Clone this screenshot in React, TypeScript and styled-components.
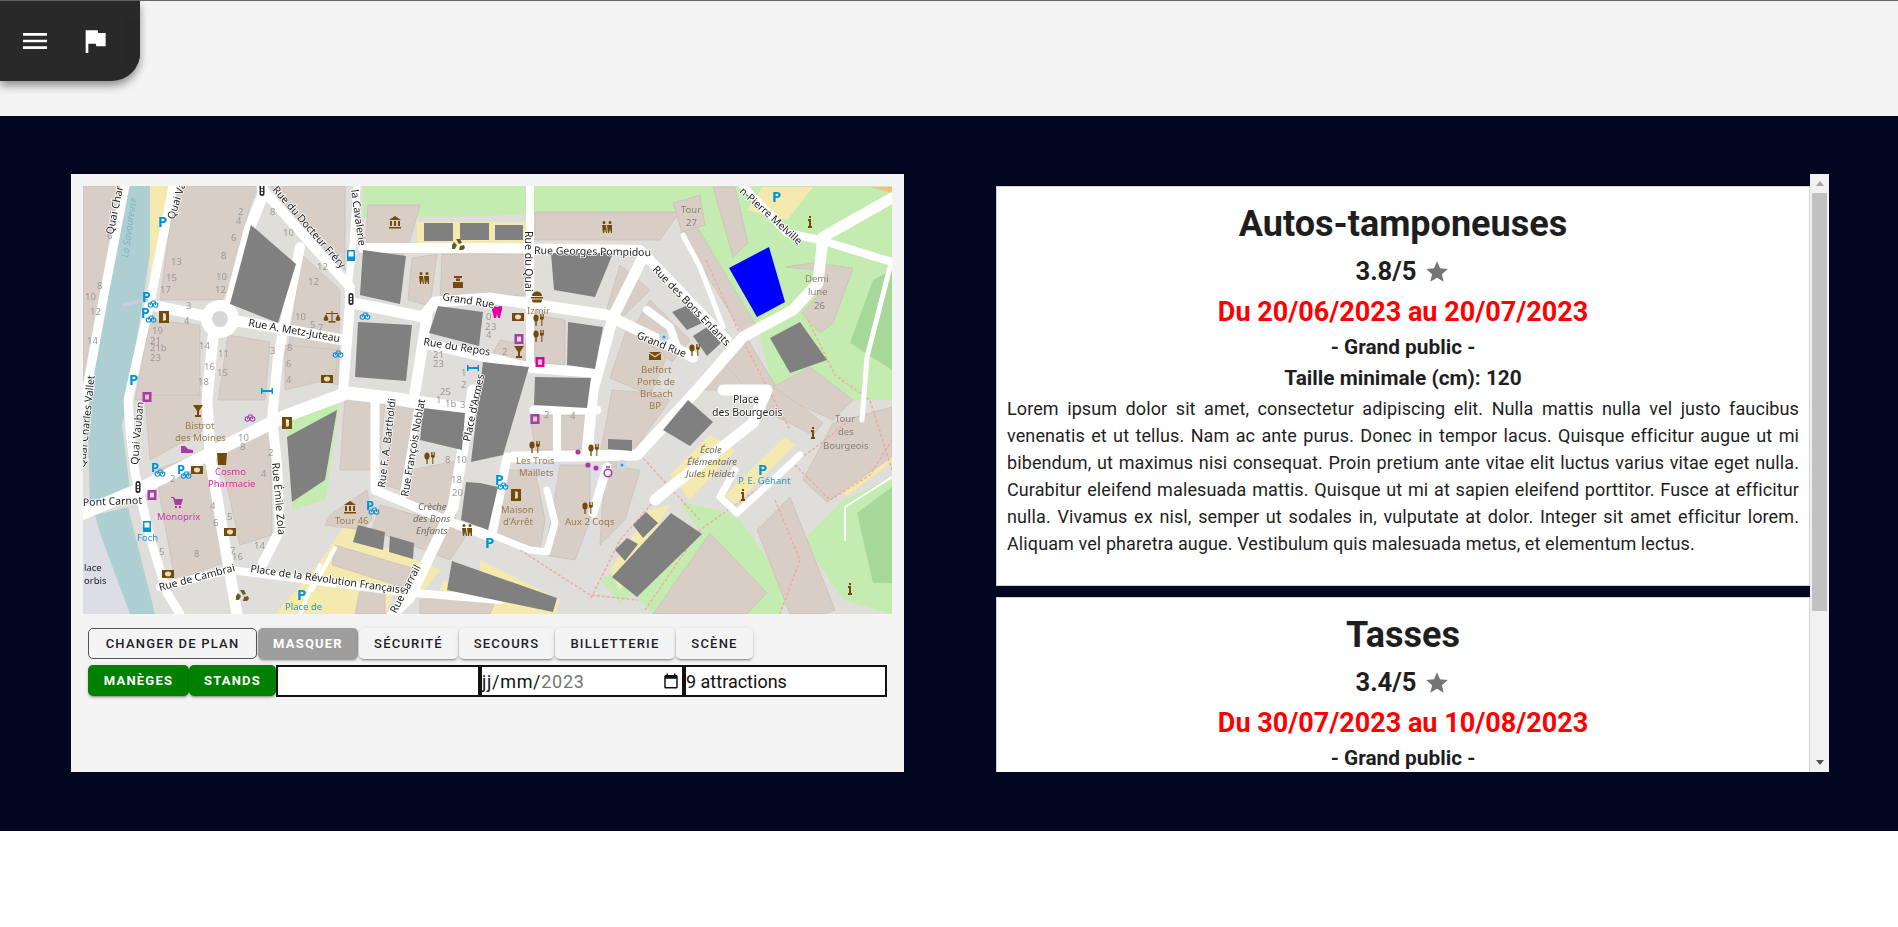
import React from "react";
import styled, { createGlobalStyle } from "styled-components";

const GlobalStyle = createGlobalStyle`
  html, body {
    margin: 0;
    padding: 0;
    background: #fff;
    font-family: Roboto, "Liberation Sans", sans-serif;
    overflow: hidden;
  }
`;

const Page = styled.div`
  width: 1898px;
  height: 927px;
  background: #fff;
`;

const Header = styled.header`
  height: 115px;
  background: #f4f4f4;
  border-top: 1px solid #666;
`;

const Toolbar = styled.nav`
  width: 140px;
  height: 80px;
  display: flex;
  align-items: center;
  gap: 28px;
  padding-left: 19px;
  box-sizing: border-box;
  background: #292929;
  border-bottom-right-radius: 28px;
  box-shadow: 0 5px 9px rgba(0, 0, 0, 0.4);
  position: relative;
  overflow: hidden;
  z-index: 2;
`;

const ToolbarTab = styled.span`
  position: absolute;
  right: 0;
  top: 19px;
  width: 15px;
  height: 44px;
  background: #272727;
  border-bottom-left-radius: 6px;
`;

const ToolIcon = styled.svg`
  width: 32px;
  height: 32px;
  fill: #fff;
  flex: none;
`;

const Hero = styled.main`
  height: 715px;
  box-sizing: border-box;
  padding: 58px 69px 59px 71px;
  background: #030620;
  display: grid;
  grid-template-columns: 833px 833px;
  column-gap: 92px;
`;

const MapPanel = styled.section`
  background: #f4f4f4;
  padding: 12px;
  box-sizing: border-box;
  height: 598px;
`;

const MapFrame = styled.div`
  width: 809px;
  height: 428px;
  overflow: hidden;
  background: #dedcd9;
`;

const MapSvg = styled.svg`
  display: block;
  width: 809px;
  height: 428px;
  filter: blur(0.35px);
`;

const Controls = styled.div`
  margin-top: 14px;
  padding-left: 5px;
  display: flex;
  flex-direction: column;
  gap: 5px;
`;

const ControlRow = styled.div<{ $gap?: number }>`
  display: flex;
  gap: ${(p) => p.$gap ?? 0}px;
  height: 32px;
`;

type Tone = "outlined" | "active" | "plain" | "green";

const toneStyles: Record<Tone, string> = {
  outlined: "background:#f4f4f4;color:#1d1d2b;border:1px solid #555;box-shadow:none;",
  active: "background:#9e9e9e;color:#fff;font-weight:700;",
  plain: "background:#f4f4f4;color:#1d1d2b;",
  green: "background:#008000;color:#fff;font-weight:700;",
};

const Btn = styled.button<{ $tone: Tone; $w: number }>`
  width: ${(p) => p.$w}px;
  height: 31px;
  padding: 0;
  border: none;
  border-radius: 5px;
  font-family: Roboto, sans-serif;
  font-size: 13px;
  font-weight: 500;
  letter-spacing: 1.2px;
  text-transform: uppercase;
  box-shadow: 0 3px 1px -2px rgba(0, 0, 0, 0.2), 0 2px 2px 0 rgba(0, 0, 0, 0.14),
    0 1px 5px 0 rgba(0, 0, 0, 0.12);
  ${(p) => toneStyles[p.$tone]}
`;

const Field = styled.div<{ $w: number; $spaced?: boolean }>`
  width: ${(p) => p.$w}px;
  height: 32px;
  box-sizing: border-box;
  border: 2px solid #111;
  background: #fff;
  font-size: 18px;
  letter-spacing: ${(p) => (p.$spaced ? "0.7px" : "0")};
  color: #111;
  display: flex;
  align-items: center;
`;

const DateMuted = styled.span`
  color: #757575;
`;

const CalendarIcon = styled.svg`
  width: 18px;
  height: 18px;
  margin-left: auto;
  margin-right: 2px;
  fill: #111;
`;

const ListPane = styled.section`
  height: 598px;
  display: flex;
`;

const ListScroller = styled.div`
  width: 814px;
  flex: none;
  overflow: hidden;
  padding-top: 12px;
  box-sizing: border-box;
`;

const Card = styled.article`
  background: #fff;
  box-sizing: border-box;
  height: 400px;
  margin-bottom: 11px;
  padding: 15px 10px 0;
  border: 1px solid #cfcfd6;
  color: #1e1e1e;
  text-align: center;
`;

const Title = styled.h2`
  margin: 0;
  font-size: 36px;
  font-weight: 700;
  line-height: 44px;
`;

const Rating = styled.div`
  margin-top: 7px;
  font-size: 25.6px;
  font-weight: 700;
  line-height: 36px;
  display: flex;
  justify-content: center;
  align-items: center;
  gap: 8px;
`;

const StarIcon = styled.svg`
  width: 26px;
  height: 26px;
  fill: #757575;
  margin-top: 2px;
`;

const Dates = styled.div`
  margin-top: 4px;
  font-size: 27px;
  font-weight: 700;
  line-height: 38px;
  color: #f00;
`;

const Audience = styled.div`
  font-size: 20.8px;
  font-weight: 700;
  line-height: 32px;
`;

const MinSize = styled.div`
  font-size: 20.8px;
  font-weight: 700;
  line-height: 31px;
  margin-bottom: 1px;
`;

const Description = styled.p`
  margin: 0;
  font-size: 18px;
  line-height: 27px;
  letter-spacing: 0.1px;
  text-align: justify;
`;

const ScrollBar = styled.div`
  width: 19px;
  flex: none;
  background: #f1f1f1;
  display: flex;
  flex-direction: column;
`;

const ScrollArrow = styled.div<{ $down?: boolean }>`
  height: 19px;
  flex: none;
  display: flex;
  align-items: center;
  justify-content: center;
  &::before {
    content: "";
    border-left: 4px solid transparent;
    border-right: 4px solid transparent;
    ${(p) => (p.$down ? "border-top: 5px solid #505050;" : "border-bottom: 5px solid #a3a3a3;")}
  }
`;

const ScrollTrack = styled.div`
  flex: 1;
  padding: 0 2px;
`;

const ScrollThumb = styled.div`
  height: 418px;
  background: #c1c1c1;
`;

const LOREM =
  "Lorem ipsum dolor sit amet, consectetur adipiscing elit. Nulla mattis nulla vel justo faucibus venenatis et ut tellus. Nam ac ante purus. Donec in tempor lacus. Quisque efficitur augue ut mi bibendum, ut maximus nisi consequat. Proin pretium ante vitae elit luctus varius vitae eget nulla. Curabitur eleifend malesuada mattis. Quisque ut mi at sapien eleifend porttitor. Fusce at efficitur nulla. Vivamus ex nisl, semper ut sodales in, vulputate at dolor. Integer sit amet efficitur lorem. Aliquam vel pharetra augue. Vestibulum quis malesuada metus, et elementum lectus.";

const attractions = [
  { name: "Autos-tamponeuses", rate: "3.8/5", dates: "Du 20/06/2023 au 20/07/2023", min: 120 },
  { name: "Tasses", rate: "3.4/5", dates: "Du 30/07/2023 au 10/08/2023", min: 100 },
];

/* map data, in page coordinates (viewBox starts at the map's corner) */
type Pts = number[];
const BUILDINGS: Pts[] = [
  [125, 186, 122, 215, 112, 270, 100, 320, 90, 380, 83, 400, 83, 186],
  [176, 186, 258, 186, 250, 205, 232, 280, 222, 300, 160, 300, 168, 240],
  [270, 186, 345, 186, 345, 270, 320, 250],
  [302, 255, 340, 290, 338, 385, 285, 372],
  [372, 262, 402, 258, 410, 240, 420, 205, 368, 205, 366, 240],
  [412, 258, 437, 254, 430, 306, 408, 300],
  [442, 254, 525, 254, 525, 295, 440, 300],
  [535, 212, 680, 212, 660, 240, 535, 240],
  [673, 203, 700, 195, 705, 225, 682, 233],
  [713, 187, 735, 187, 748, 243, 733, 257],
  [680, 233, 697, 227, 757, 327, 743, 333],
  [150, 320, 200, 325, 200, 400, 135, 400],
  [228, 335, 270, 342, 265, 400, 218, 400],
  [285, 345, 338, 350, 335, 378, 285, 390],
  [145, 395, 205, 395, 205, 430, 150, 460],
  [155, 470, 212, 450, 232, 560, 175, 580],
  [218, 445, 270, 420, 272, 535, 240, 545],
  [345, 395, 385, 405, 378, 470, 340, 470],
  [395, 405, 415, 410, 400, 490, 385, 485],
  [410, 470, 462, 460, 455, 520, 405, 498],
  [330, 515, 367, 490, 372, 520, 362, 530, 325, 525],
  [380, 505, 470, 530, 450, 560, 372, 530],
  [335, 545, 425, 572, 412, 590, 332, 565],
  [360, 590, 385, 590, 385, 614, 355, 614],
  [420, 600, 500, 590, 490, 614, 420, 614],
  [530, 415, 590, 415, 585, 450, 535, 450],
  [535, 315, 565, 320, 565, 365, 535, 362],
  [500, 340, 530, 345, 528, 368, 490, 358],
  [620, 265, 650, 290, 620, 320, 605, 315],
  [628, 325, 672, 345, 650, 395, 610, 378],
  [650, 300, 690, 340, 672, 362, 632, 330],
  [612, 390, 640, 392, 670, 400, 620, 470, 600, 455],
  [560, 465, 590, 465, 590, 520, 575, 560, 545, 555],
  [505, 470, 535, 470, 545, 520, 540, 550, 490, 530],
  [605, 465, 640, 470, 625, 520, 600, 545],
  [720, 360, 745, 345, 760, 365, 735, 390, 700, 390],
  [745, 335, 775, 385, 823, 423, 813, 435, 773, 415, 720, 360],
  [785, 267, 813, 263, 853, 268, 833, 323, 820, 333, 802, 313, 817, 297, 818, 270],
  [803, 480, 833, 423, 892, 407, 892, 457, 827, 502],
  [773, 387, 810, 367, 853, 400, 833, 420, 800, 405],
  [653, 614, 710, 533, 767, 593, 747, 614],
  [757, 530, 790, 497, 835, 610, 825, 614, 790, 614],
];

const GREENS: Pts[] = [
  [363, 186, 713, 186, 730, 210, 700, 212, 363, 218],
  [713, 186, 892, 186, 892, 400, 853, 400, 810, 367, 773, 387, 757, 327, 697, 227],
  [286, 413, 340, 395, 326, 500, 292, 510],
  [680, 502, 720, 510, 740, 520, 790, 590, 780, 614, 653, 614, 637, 597, 702, 534],
  [803, 540, 843, 500, 892, 478, 892, 614, 843, 600],
  [600, 580, 625, 566, 640, 590, 620, 602],
];

const DARK_GREENS: Pts[] = [
  [873, 280, 892, 270, 892, 370, 850, 343],
  [857, 513, 892, 487, 892, 583, 873, 583],
];

const YELLOWS: Pts[] = [
  [417, 222, 527, 222, 527, 244, 417, 244],
  [318, 565, 345, 525, 380, 545, 440, 570, 425, 590, 395, 590, 385, 614, 275, 614],
  [444, 580, 492, 595, 490, 614, 430, 614],
  [480, 560, 560, 600, 555, 614, 480, 614],
  [610, 570, 650, 510, 670, 505, 620, 590],
  [725, 495, 785, 437, 795, 445, 735, 505],
  [150, 186, 175, 186, 150, 300],
  [137, 400, 145, 340, 150, 345, 140, 400],
  [763, 187, 813, 187, 787, 220, 747, 210],
  [842, 492, 892, 455, 892, 462, 847, 496],
  [670, 475, 710, 435, 735, 450, 690, 500],
];

const LILAC: Pts[] = [
  [83, 530, 95, 520, 130, 614, 83, 614],
  [505, 457, 560, 458, 600, 470, 585, 500, 545, 480],
  [552, 490, 595, 520, 590, 545, 560, 540],
];

type Road = { p: Pts; w: number };
const ROADS: Road[] = [
  { p: [125, 186, 103, 300, 83, 410], w: 9 },
  { p: [173, 186, 150, 303, 142, 337, 128, 400, 130, 430, 135, 473, 150, 537, 167, 593, 180, 614], w: 9 },
  { p: [83, 513, 138, 490, 283, 417, 347, 393, 390, 398, 470, 410], w: 13 },
  { p: [150, 305, 220, 319, 250, 323, 343, 340], w: 11 },
  { p: [230, 303, 250, 227, 263, 195, 262, 186], w: 11 },
  { p: [263, 190, 350, 287, 350, 303, 343, 392], w: 10 },
  { p: [213, 337, 207, 400, 210, 457, 227, 557, 237, 614], w: 11 },
  { p: [300, 247, 278, 357, 272, 420, 277, 463, 280, 530, 263, 563], w: 10 },
  { p: [357, 186, 353, 243, 348, 290], w: 7 },
  { p: [363, 248, 490, 248, 640, 250, 727, 340], w: 10 },
  { p: [353, 303, 423, 317, 435, 302, 490, 298, 607, 315, 693, 357], w: 11 },
  { p: [427, 317, 415, 392], w: 11 },
  { p: [423, 343, 490, 358, 532, 368, 597, 373], w: 10 },
  { p: [530, 186, 530, 293, 530, 367], w: 8 },
  { p: [643, 257, 613, 317, 593, 390, 587, 453], w: 11 },
  { p: [892, 198, 823, 237, 818, 283, 793, 310, 743, 337, 697, 390, 637, 455, 513, 457], w: 11 },
  { p: [743, 186, 787, 233, 820, 240, 892, 262], w: 8 },
  { p: [890, 267, 867, 357, 862, 420], w: 5 },
  { p: [683, 235, 700, 267, 723, 327], w: 5 },
  { p: [647, 310, 670, 327, 677, 347], w: 8 },
  { p: [723, 390, 767, 390, 753, 423, 667, 490, 655, 500], w: 11 },
  { p: [800, 455, 737, 513, 720, 497, 735, 470], w: 7 },
  { p: [534, 410, 597, 410], w: 9 },
  { p: [557, 410, 557, 455], w: 8 },
  { p: [507, 457, 493, 530], w: 9 },
  { p: [547, 490, 555, 523, 547, 552, 530, 550, 480, 530], w: 7 },
  { p: [607, 467, 593, 513], w: 9 },
  { p: [160, 587, 230, 570, 403, 592, 500, 600], w: 8 },
  { p: [473, 390, 453, 507, 410, 597, 393, 614], w: 11 },
  { p: [418, 407, 403, 497], w: 7 },
  { p: [375, 400, 375, 490, 453, 523, 490, 537], w: 9 },
  { p: [320, 565, 300, 614], w: 4 },
  { p: [335, 548, 312, 590], w: 4 },
  { p: [892, 477, 845, 507, 845, 540], w: 2 },
];

const FOOTWAYS: Pts[] = [
  [706, 260, 745, 345, 790, 430],
  [640, 455, 700, 520],
  [520, 550, 590, 595, 638, 600],
  [645, 610, 700, 530, 812, 450, 850, 420],
  [795, 465, 830, 500, 870, 475, 892, 440],
  [655, 500, 620, 540, 590, 600],
  [808, 320, 835, 375, 870, 400, 892, 470],
  [775, 500, 800, 560, 780, 614],
];

const GRAYS: Pts[] = [
  [251, 225, 296, 264, 278, 323, 230, 304],
  [363, 250, 406, 256, 400, 304, 360, 295],
  [358, 322, 412, 325, 406, 381, 355, 377],
  [438, 306, 483, 312, 479, 346, 429, 333],
  [424, 223, 453, 223, 453, 241, 424, 241],
  [460, 223, 489, 223, 489, 240, 460, 240],
  [495, 225, 523, 225, 523, 240, 495, 240],
  [551, 253, 613, 253, 595, 297, 554, 290],
  [568, 322, 603, 327, 595, 369, 567, 365],
  [483, 362, 529, 367, 503, 455, 471, 462],
  [480, 483, 498, 487, 488, 530, 461, 520, 466, 482],
  [423, 408, 465, 413, 462, 450, 420, 440],
  [535, 377, 591, 378, 587, 408, 534, 405],
  [688, 400, 713, 422, 690, 446, 663, 430],
  [337, 410, 325, 480, 292, 502, 287, 437],
  [358, 525, 385, 532, 383, 550, 353, 542],
  [390, 536, 414, 543, 413, 559, 389, 552],
  [452, 561, 557, 598, 553, 612, 447, 590],
  [671, 513, 702, 534, 637, 597, 612, 577],
  [646, 512, 658, 523, 643, 538, 633, 525],
  [627, 538, 638, 544, 625, 561, 615, 550],
  [688, 305, 702, 323, 687, 330, 672, 312],
  [707, 327, 721, 343, 707, 356, 693, 336],
  [800, 322, 827, 360, 790, 373, 770, 338],
  [608, 439, 632, 440, 632, 451, 608, 449],
];

type Lbl = { x: number; y: number; t: string; r?: number; c?: string; i?: boolean };
const INK = "#222";
const BR = "#9b7a4c";
const PK = "#c038b0";
const BL = "#2f8fd0";
const GY = "#8a8275";
const IT = "#6d6a5c";
const ROAD_LABELS: Lbl[] = [
  { x: 113, y: 235, t: "Quai Charles", r: -78 },
  { x: 85, y: 468, t: "Quai Charles Vallet", r: -84 },
  { x: 174, y: 220, t: "Quai Va", r: -72 },
  { x: 138, y: 465, t: "Quai Vauban", r: -85 },
  { x: 272, y: 190, t: "Rue du Docteur Fréry", r: 49 },
  { x: 351, y: 190, t: "la Cavalerie", r: 82 },
  { x: 442, y: 300, t: "Grand Rue", r: 9 },
  { x: 248, y: 326, t: "Rue A. Metz-Juteau", r: 10 },
  { x: 423, y: 345, t: "Rue du Repos", r: 9 },
  { x: 534, y: 254, t: "Rue Georges Pompidou", r: 1 },
  { x: 525, y: 231, t: "Rue du Quai", r: 90 },
  { x: 652, y: 270, t: "Rue des Bons Enfants", r: 46 },
  { x: 636, y: 338, t: "Grand Rue", r: 22 },
  { x: 739, y: 192, t: "n-Pierre Melville", r: 42 },
  { x: 470, y: 442, t: "Place d'Armes", r: -78 },
  { x: 385, y: 488, t: "Rue F. A. Bartholdi", r: -83 },
  { x: 408, y: 497, t: "Rue François Noblat", r: -80 },
  { x: 272, y: 463, t: "Rue Émile Zola", r: 85 },
  { x: 83, y: 506, t: "Pont Carnot", r: -2 },
  { x: 160, y: 591, t: "Rue de Cambrai", r: -15 },
  { x: 250, y: 572, t: "Place de la Révolution Française", r: 8 },
  { x: 396, y: 614, t: "Rue Sarrail", r: -62 },
  { x: 733, y: 403, t: "Place" },
  { x: 712, y: 416, t: "des Bourgeois" },
];
const POI_LABELS: Lbl[] = [
  { x: 681, y: 213, t: "Tour", c: GY },
  { x: 686, y: 226, t: "27", c: GY },
  { x: 805, y: 282, t: "Demi", c: GY },
  { x: 808, y: 295, t: "lune", c: GY },
  { x: 814, y: 309, t: "26", c: GY },
  { x: 527, y: 314, t: "Izmir", c: BR },
  { x: 641, y: 373, t: "Belfort", c: BR },
  { x: 637, y: 385, t: "Porte de", c: BR },
  { x: 640, y: 397, t: "Brisach", c: BR },
  { x: 649, y: 409, t: "BP", c: BR },
  { x: 516, y: 464, t: "Les Trois", c: BR },
  { x: 519, y: 476, t: "Maillets", c: BR },
  { x: 501, y: 513, t: "Maison", c: BR },
  { x: 503, y: 525, t: "d'Arrêt", c: BR },
  { x: 565, y: 525, t: "Aux 2 Coqs", c: BR },
  { x: 185, y: 429, t: "Bistrot", c: BR },
  { x: 175, y: 441, t: "des Moines", c: BR },
  { x: 215, y: 475, t: "Cosmo", c: "#d62fa0" },
  { x: 208, y: 487, t: "Pharmacie", c: "#d62fa0" },
  { x: 157, y: 520, t: "Monoprix", c: PK },
  { x: 137, y: 541, t: "Foch", c: BL },
  { x: 335, y: 524, t: "Tour 46", c: BR },
  { x: 84, y: 571, t: "lace", c: INK },
  { x: 84, y: 584, t: "orbis", c: INK },
  { x: 285, y: 610, t: "Place de", c: BL },
  { x: 738, y: 484, t: "P. E. Géhant", c: BL },
  { x: 835, y: 422, t: "Tour", c: GY },
  { x: 838, y: 435, t: "des", c: GY },
  { x: 823, y: 449, t: "Bourgeois", c: GY },
  { x: 700, y: 453, t: "École", c: IT, i: true },
  { x: 687, y: 465, t: "Élémentaire", c: IT, i: true },
  { x: 686, y: 477, t: "Jules Heidet", c: IT, i: true },
  { x: 418, y: 510, t: "Crèche", c: IT, i: true },
  { x: 413, y: 522, t: "des Bons", c: IT, i: true },
  { x: 416, y: 534, t: "Enfants", c: IT, i: true },
];
const HOUSE_NUMBERS: [number, number, string][] = [
  [238, 215, "2"], [236, 224, "4"], [231, 241, "6"], [221, 259, "8"], [216, 280, "10"], [215, 293, "12"],
  [171, 265, "13"], [166, 281, "15"], [160, 293, "17"], [186, 309, "3"], [184, 324, "4"], [152, 334, "19"],
  [150, 344, "21"], [150, 351, "21b"], [150, 361, "23"], [199, 349, "14"], [204, 370, "16"], [198, 385, "18"],
  [218, 357, "11"], [217, 376, "15"], [270, 354, "3"], [287, 351, "8"], [286, 367, "6"], [286, 383, "4"],
  [107, 239, "6"], [97, 289, "8"], [85, 300, "10"], [90, 315, "12"], [87, 344, "14"], [270, 215, "8"],
  [283, 236, "10"], [317, 270, "12"], [308, 285, "12"], [295, 320, "10"], [310, 328, "5"], [318, 331, "7"],
  [440, 395, "25"], [433, 367, "23"], [433, 358, "21"], [461, 376, "1"], [461, 388, "2"], [436, 403, "1"],
  [445, 407, "1b"], [460, 408, "3"], [238, 441, "10"], [240, 450, "8"], [268, 456, "2"], [261, 477, "4"],
  [170, 482, "2"], [210, 509, "4"], [213, 526, "6"], [227, 520, "5"], [230, 554, "7"], [232, 560, "16"],
  [254, 549, "14"], [159, 555, "5"], [194, 557, "8"], [451, 483, "18"], [452, 496, "20"], [445, 463, "8"],
  [456, 463, "10"], [544, 418, "2"], [570, 419, "4"], [486, 320, "0"], [485, 330, "2"], [486, 338, "4"],
  [491, 330, "3"], [502, 355, "2"],
];

type Mark = { k: string; x: number; y: number; c: string };
const BROWN = "#734a08";
const MAG = "#e000a0";
const PUR = "#ac39ac";
const SKY = "#0092da";
const markSet = (k: string, c: string, at: number[][]): Mark[] => at.map(([x, y]) => ({ k, x, y, c }));
const MARKS: Mark[] = [
  ...markSet("fork", BROWN, [[539, 320], [539, 336], [695, 350], [535, 447], [594, 450], [588, 508], [430, 458]]),
  ...markSet("bank", BROWN, [[395, 222], [350, 507]]),
  ...markSet("people", BROWN, [[424, 278], [467, 530], [607, 227]]),
  ...markSet("info", BROWN, [[810, 222], [813, 433], [743, 495], [850, 589]]),
  ...markSet("door", BROWN, [[164, 317], [287, 423], [516, 495]]),
  ...markSet("box", BROWN, [[327, 379], [197, 470], [230, 532], [168, 574], [518, 317]]),
  ...markSet("glass", BROWN, [[519, 352], [198, 411]]),
  ...markSet("cup", BROWN, [[222, 459]]),
  ...markSet("burger", BROWN, [[537, 297]]),
  ...markSet("scale", BROWN, [[332, 317]]),
  ...markSet("police", BROWN, [[458, 282]]),
  ...markSet("mail", BROWN, [[655, 356]]),
  ...markSet("tooth", MAG, [[497, 312]]),
  ...markSet("square", MAG, [[540, 362]]),
  ...markSet("square", PUR, [[519, 339], [535, 419], [147, 397], [152, 495]]),
  ...markSet("cart", PUR, [[177, 502]]),
  ...markSet("shoe", PUR, [[187, 449]]),
  ...markSet("ring", PUR, [[608, 472]]),
  ...markSet("dot", PUR, [[578, 452], [588, 465], [596, 468]]),
  ...markSet("bike", SKY, [[338, 353], [365, 315], [153, 303], [151, 318], [160, 472], [186, 474], [374, 510], [503, 485]]),
  ...markSet("bike", PUR, [[250, 417]]),
  ...markSet("bus", SKY, [[351, 256], [147, 527]]),
  ...markSet("bed", SKY, [[267, 391], [473, 368]]),
  ...markSet("signal", "#222", [[262, 190], [351, 299], [138, 487]]),
  ...markSet("recycle", "#6a5a20", [[458, 245], [242, 596]]),
  ...markSet("drop", "#7fb2d0", [[664, 337], [622, 465]]),
];

const PARKINGS: [number, number, number][] = [
  [158, 227, 15], [142, 302, 14], [141, 318, 14], [129, 385, 15], [151, 472, 13], [177, 474, 13],
  [366, 510, 13], [495, 485, 14], [485, 548, 15], [297, 600, 15], [772, 202, 15], [758, 475, 15],
];

const pts = (p: Pts) => p.join(" ");

const MARK_PATHS: Record<string, string> = {
  bank: "M-6-2 0-6l6 4zM-5-1h2v5h-2zM-1-1h2v5h-2zM3-1h2v5h-2zM-6 5H6v1.500H-6z",
  people: "M-3-6a1.500 1.500 0 1 1 0 3 1.500 1.500 0 0 1 0-3zm6 0a1.500 1.500 0 1 1 0 3 1.500 1.500 0 0 1 0-3zM-5-2h4l1 8h-1l-1-4-1 4h-1zm5 0h5V6H4L3 2 2 6H1z",
  info: "M-1-6h2v2h-2zM-2-3h3v7h1v2h-4V4h1V-1h-1z",
  door: "M-5-6H5V6H-5zM-1-4v8L2 3V-3z",
  glass: "M-5-6H5L1 0V4H3V6H-3V4h2V0z",
  cup: "M-5-6H5L4 6H-4z",
  burger: "M-5-1C-5-7 5-7 5-1zM-6 0H6v1.500H-6zM-5 2.500H5C5 5 4 5.500 3 5.500H-3C-4 5.500-5 5-5 2.500z",
  scale: "M-.5-6h1v10h3v1.500h-7V4h3zM-6-4H6v1H-6zM-6-3-8.500 2a2.500 2 0 0 0 5 0zM6-3 3.500 2a2.500 2 0 0 0 5 0z",
  police: "M-4-6H4V-4H-4zM-2-3.500H2V-1H-2zM-5 0H5V6H-5z",
  mail: "M-6-4H6L0 0zM-6-2.500 0 1.500 6-2.500V4H-6z",
  tooth: "M-4-6C-2-6 -1-5 0-5S2-6 4-6C6-6 5-1 4 1L3 6 1 6 0 2-1 6-3 6-4 1C-5-1-6-6-4-6z",
  square: "M-4.500-5H4.500V5H-4.500zM-2-2.500V2.500H2V-2.500z",
  cart: "M-6-5H-3L-2-3H6L4 3H-2L-4-4H-6zM-2 4H0V6H-2zM2 4H4V6H2z",
  shoe: "M-6-3H-2L1 0 6 1V4H-6z",
  bus: "M-4-6H4V5H-4zM-2.500-4.500v5h5v-5z",
  bed: "M-6-3h1.500V-1h9V-3H6V3H4.500V1h-9V3H-6z",
  recycle: "M-2-6H2L4-2 1-1zM-6 0-4-3-1 0-3 4H-6zM6 0 7 3 5 5H1L2 1z",
};

const Marker = ({ k, x, y, c }: Mark) => {
  const t = `translate(${x} ${y})`;
  switch (k) {
    case "fork":
      return (
        <g transform={t} fill={c}>
          <ellipse cx="-3" cy="-2" rx="2.600" ry="3.600" />
          <rect x="-3.600" y="0" width="1.300" height="6" />
          <path d="M1-6h.8v3h.7v-3h.8v3h.7v-3h.8v5l-1.500 1v6h-1V0L1-1z" />
        </g>
      );
    case "box":
      return (
        <g transform={t}>
          <rect x="-6" y="-4" width="12" height="8" fill={c} />
          <ellipse cx="0" cy="0" rx="3" ry="2.400" fill="#e8dcc8" />
        </g>
      );
    case "ring":
      return (
        <g transform={t} fill="none" stroke={c} strokeWidth="1.500">
          <circle cx="0" cy="1" r="3.800" />
          <path d="M-2-5H2" />
        </g>
      );
    case "dot":
      return <circle transform={t} r="2.600" fill={c} />;
    case "drop":
      return (
        <g transform={t}>
          <circle r="5" fill="#c4dcea" />
          <circle r="1.500" fill="#5a90b8" />
        </g>
      );
    case "bike":
      return (
        <g transform={t} stroke={c} fill="none" strokeWidth="1.100">
          <circle cx="-2.600" cy="2" r="2.200" />
          <circle cx="2.600" cy="2" r="2.200" />
          <path d="M-2.600 2-1-2h3l.6 4" />
        </g>
      );
    case "signal":
      return (
        <g transform={t}>
          <rect x="-2.500" y="-6" width="5" height="12" rx="2.500" fill={c} />
          <circle cy="-3" r="1.200" fill="#eee" />
          <circle cy="0" r="1.200" fill="#eee" />
          <circle cy="3" r="1.200" fill="#eee" />
        </g>
      );
    default:
      return <path transform={t} fill={c} d={MARK_PATHS[k]} />;
  }
};

const CityMap = () => (
  <MapSvg viewBox="83 186 809 428">
    <rect x="83" y="186" width="809" height="428" fill="#e0dedb" />
    {GREENS.map((p, i) => <polygon key={i} points={pts(p)} fill="#c5ecb0" />)}
    {DARK_GREENS.map((p, i) => <polygon key={i} points={pts(p)} fill="#a6d89a" />)}
    {/* river */}
    <polygon points="127,186 160,186 128,400 122,425 130,490 90,510 87,390" fill="#aecfd1" />
    <polygon points="95,515 128,507 155,614 123,614" fill="#aecfd1" />
    <polygon points="870,187 892,187 892,193" fill="#f0c080" />
    {LILAC.map((p, i) => <polygon key={i} points={pts(p)} fill="#dddde8" />)}
    {YELLOWS.map((p, i) => <polygon key={i} points={pts(p)} fill="#f4eab0" />)}
    {BUILDINGS.map((p, i) => <polygon key={i} points={pts(p)} fill="#d8cec6" stroke="#c6bbb1" strokeWidth="0.6" />)}
    {FOOTWAYS.map((p, i) => (
      <polyline key={i} points={pts(p)} fill="none" stroke="#efa9a0" strokeWidth="1.400" strokeDasharray="3 2" />
    ))}
    {ROADS.map((r, i) => (
      <polyline key={i} points={pts(r.p)} fill="none" stroke="#fff" strokeWidth={r.w} strokeLinejoin="round" strokeLinecap="round" />
    ))}
    <circle cx="220" cy="319" r="19" fill="#fff" />
    <circle cx="220" cy="319" r="8" fill="#d6d6d4" />
    <polyline points="148,300 122,305" fill="none" stroke="#ccd" strokeWidth="3" />
    {GRAYS.map((p, i) => <polygon key={i} points={pts(p)} fill="#808080" />)}
    <polygon points="769,247 785,302 757,317 729,268" fill="#0000ff" />
    <g fontFamily="'Noto Sans', sans-serif" fontSize="9.5" fill="#9a9a9a">
      {HOUSE_NUMBERS.map(([x, y, t], i) => <text key={i} x={x} y={y}>{t}</text>)}
    </g>
    {MARKS.map((m, i) => <Marker key={i} {...m} />)}
    <g fontFamily="'Noto Sans', sans-serif" fontWeight="700" fill="#0092da">
      {PARKINGS.map(([x, y, s], i) => <text key={i} x={x} y={y} fontSize={s}>P</text>)}
    </g>
    <g fontFamily="'Noto Sans', sans-serif" fontSize="10.5" fill={INK} stroke="#fff" strokeWidth="1.600" paintOrder="stroke">
      {ROAD_LABELS.map((l, i) => (
        <text key={i} x={l.x} y={l.y} transform={l.r ? `rotate(${l.r} ${l.x} ${l.y})` : undefined}>{l.t}</text>
      ))}
    </g>
    <g fontFamily="'Noto Sans', sans-serif" fontSize="9.5">
      {POI_LABELS.map((l, i) => (
        <text key={i} x={l.x} y={l.y} fill={l.c} fontStyle={l.i ? "italic" : undefined}>{l.t}</text>
      ))}
    </g>
    <text x="128" y="258" transform="rotate(-82 128 258)" fontFamily="'Noto Sans', sans-serif" fontSize="9.5" fontStyle="italic" fill="#7fb0c8">La Savoureuse</text>
  </MapSvg>
);

export default function App() {
  return (
    <Page>
      <GlobalStyle />
      <Header>
        <Toolbar>
          <ToolIcon viewBox="0 0 24 24"><path d="M3 18h18v-2H3v2zm0-5h18v-2H3v2zm0-7v2h18V6H3z" /></ToolIcon>
          <ToolIcon viewBox="0 0 24 24"><path d="M14.4 6L14 4H5v17h2v-7h5.6l.4 2h7V6z" /></ToolIcon>
          <ToolbarTab />
        </Toolbar>
      </Header>
      <Hero>
        <MapPanel>
          <MapFrame>
            <CityMap />
          </MapFrame>
          <Controls>
            <ControlRow $gap={1}>
              <Btn $tone="outlined" $w={169}>Changer de plan</Btn>
              <Btn $tone="active" $w={100}>Masquer</Btn>
              <Btn $tone="plain" $w={99}>Sécurité</Btn>
              <Btn $tone="plain" $w={95}>Secours</Btn>
              <Btn $tone="plain" $w={120}>Billetterie</Btn>
              <Btn $tone="plain" $w={77}>Scène</Btn>
            </ControlRow>
            <ControlRow>
              <Btn $tone="green" $w={101}>Manèges</Btn>
              <Btn $tone="green" $w={87}>Stands</Btn>
              <Field $w={204} />
              <Field $w={204} $spaced>
                jj/mm/<DateMuted>2023</DateMuted>
                <CalendarIcon viewBox="0 0 24 24">
                  <path d="M19 4h-1V2h-2v2H8V2H6v2H5c-1.100 0-2 .9-2 2v14c0 1.100.9 2 2 2h14c1.100 0 2-.9 2-2V6c0-1.100-.9-2-2-2zm0 16H5V9h14v11z" />
                </CalendarIcon>
              </Field>
              <Field $w={203}>9 attractions</Field>
            </ControlRow>
          </Controls>
        </MapPanel>
        <ListPane>
          <ListScroller>
            {attractions.map((a) => (
              <Card key={a.name}>
                <Title>{a.name}</Title>
                <Rating>
                  {a.rate}
                  <StarIcon viewBox="0 0 24 24">
                    <path d="M12 17.270 18.180 21l-1.640-7.030L22 9.240l-7.190-.61L12 2 9.190 8.630 2 9.240l5.460 4.730L5.820 21z" />
                  </StarIcon>
                </Rating>
                <Dates>{a.dates}</Dates>
                <Audience>- Grand public -</Audience>
                <MinSize>Taille minimale (cm): {a.min}</MinSize>
                <Description>{LOREM}</Description>
              </Card>
            ))}
          </ListScroller>
          <ScrollBar>
            <ScrollArrow />
            <ScrollTrack>
              <ScrollThumb />
            </ScrollTrack>
            <ScrollArrow $down />
          </ScrollBar>
        </ListPane>
      </Hero>
    </Page>
  );
}
